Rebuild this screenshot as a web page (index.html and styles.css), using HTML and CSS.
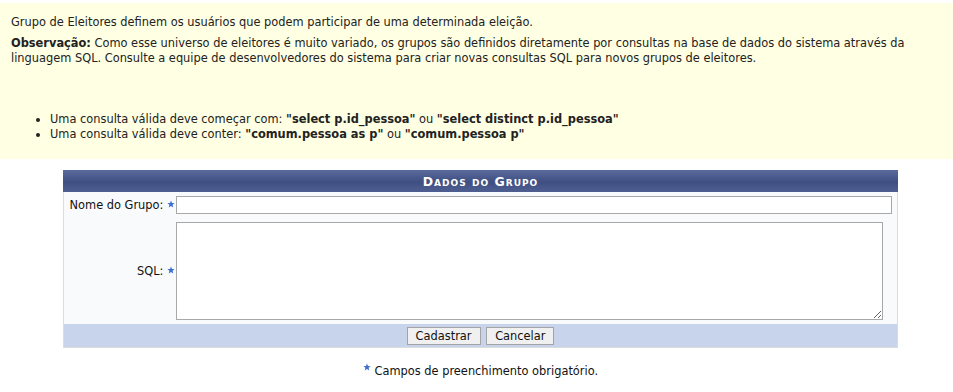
FILE: index.html
```html
<!DOCTYPE html>
<html lang="pt-BR">
<head>
    <meta charset="UTF-8">
    <title>Grupo de Eleitores</title>
    <link rel="stylesheet" href="styles.css">
</head>
<body>
    <div class="descricao">
        <p>Grupo de Eleitores definem os usuários que podem participar de uma determinada eleição.</p>
        <p><b>Observação:</b> Como esse universo de eleitores é muito variado, os grupos são definidos diretamente por consultas na base de dados do sistema através da linguagem SQL. Consulte a equipe de desenvolvedores do sistema para criar novas consultas SQL para novos grupos de eleitores.</p>
        <ul>
            <li>Uma consulta válida deve começar com: <b>"select p.id_pessoa"</b> ou <b>"select distinct p.id_pessoa"</b></li>
            <li>Uma consulta válida deve conter: <b>"comum.pessoa as p"</b> ou <b>"comum.pessoa p"</b></li>
        </ul>
    </div>

    <form class="formulario">
        <div class="caption">Dados do Grupo</div>
        <div class="linha">
            <label class="rotulo" for="nome">Nome do Grupo: <span class="req"><svg viewBox="0 0 10 10"><path d="M5 0.5 L6.2 3.6 L9.5 3.8 L7 5.9 L7.8 9.3 L5 7.5 L2.2 9.3 L3 5.9 L0.5 3.8 L3.8 3.6 Z"/></svg></span></label>
            <div class="campo"><input type="text" id="nome" class="texto"></div>
        </div>
        <div class="linha">
            <label class="rotulo" for="sql">SQL: <span class="req"><svg viewBox="0 0 10 10"><path d="M5 0.5 L6.2 3.6 L9.5 3.8 L7 5.9 L7.8 9.3 L5 7.5 L2.2 9.3 L3 5.9 L0.5 3.8 L3.8 3.6 Z"/></svg></span></label>
            <div class="campo"><textarea id="sql" class="area"></textarea></div>
        </div>
        <div class="rodape">
            <button type="button">Cadastrar</button>
            <button type="button">Cancelar</button>
        </div>
    </form>

    <p class="obrigatorio"><span class="req"><svg viewBox="0 0 10 10"><path d="M5 0.5 L6.2 3.6 L9.5 3.8 L7 5.9 L7.8 9.3 L5 7.5 L2.2 9.3 L3 5.9 L0.5 3.8 L3.8 3.6 Z"/></svg></span> Campos de preenchimento obrigatório.</p>
</body>
</html>
```

FILE: styles.css
```css
body {
    font-family: 'DejaVu Sans', Verdana, sans-serif;
    font-size: 11.4px;
    color: #222;
    margin: 0;
    padding: 3px 0 0 0;
    background-color: #fff;
}

.descricao {
    background-color: #ffffe3;
    padding: 12px 11px 18px 11px;
    line-height: 15px;
}

.descricao p {
    margin: 0 0 6px 0;
}

.descricao ul {
    margin: 46px 0 0 0;
    padding-left: 39px;
    line-height: 14.5px;
}

.formulario {
    width: 835px;
    margin: 11px 0 0 63px;
    background-color: #f9fafc;
    border-left: 1px solid #dcdcdc;
    border-right: 1px solid #dcdcdc;
    border-bottom: 1px solid #dcdcdc;
    box-sizing: border-box;
}

.caption {
    height: 22px;
    line-height: 23px;
    text-align: center;
    color: #fff;
    font-weight: bold;
    font-variant: small-caps;
    font-size: 12.5px;
    letter-spacing: 1px;
    background: linear-gradient(#5a6a9c, #404f82 55%, #4f5f92);
    margin: 0 -1px;
}

.linha {
    display: flex;
    align-items: center;
    padding: 4px 0;
}

.rotulo {
    width: 111px;
    text-align: right;
    color: #111;
    flex-shrink: 0;
}

.req svg {
    width: 8px;
    height: 8px;
    fill: #3c6fd0;
    vertical-align: 1px;
}

.campo {
    flex: 1;
    padding-left: 1px;
}

.texto {
    display: block;
    width: 716px;
    height: 18px;
    box-sizing: border-box;
    border: 1px solid #a8a8a8;
    margin: 0;
    font-family: inherit;
}

.area {
    display: block;
    width: 707px;
    height: 98px;
    box-sizing: border-box;
    border: 1px solid #a8a8a8;
    margin: 0;
    resize: both;
}

.rodape {
    background-color: #c8d4eb;
    text-align: center;
    padding: 3px 0 3px 0;
    height: 17px;
}

.rodape button {
    font-family: inherit;
    font-size: 11.4px;
    height: 18px;
    padding: 0 8px;
    background-color: #f0f0f0;
    border: 1px solid #a4a4a4;
    color: #111;
    margin: 0 1px;
}

.obrigatorio {
    width: 835px;
    margin: 15px 0 0 63px;
    text-align: center;
    color: #111;
}

.obrigatorio .req svg {
    vertical-align: 4px;
}
```
